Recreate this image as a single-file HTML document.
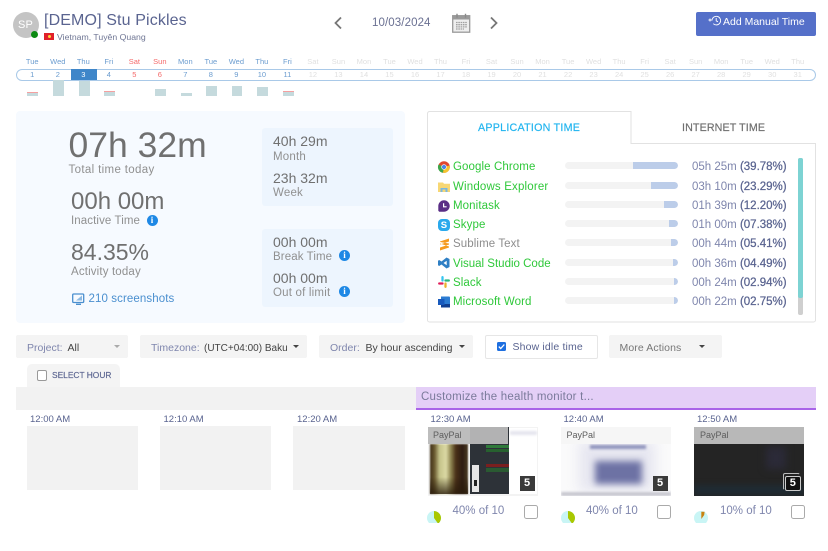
<!DOCTYPE html>
<html><head><meta charset="utf-8">
<style>
html{background:#fff}
html,body{margin:0;padding:0;width:828px;height:551px;overflow:hidden}
body{position:relative;font-family:"Liberation Sans",sans-serif;background:#fff;filter:blur(.35px)}
.t{position:absolute;white-space:nowrap;line-height:1}
.b{position:absolute}
.cal{position:absolute;left:19.5px;width:791.43px;display:grid;grid-template-columns:repeat(31,25.53px);text-align:center;font-size:7.5px;line-height:1}
.d{color:#6b9ccf}.w{color:#f46a6a}.o{color:#e0e0e0}
.s{color:#fff}
.bar{position:absolute;background:#c5dadd;width:10.5px;bottom:455px}
.red{border-top:1.5px solid #f5a0a0;box-sizing:border-box}
.g{color:#2fc83a;font-size:11.5px;letter-spacing:.1px}
.tr{position:absolute;left:565px;width:112.5px;height:7px;background:#f3f3f3;border-radius:3.5px;overflow:hidden}
.tr i{position:absolute;right:0;top:0;bottom:0;background:#bccde9;border-radius:0 3.5px 3.5px 0}
.tm{position:absolute;left:692px;font-size:11.5px;line-height:1;color:#7f86ad;white-space:nowrap}
.tm b{font-weight:normal;color:#5a6490;-webkit-text-stroke:.25px #5a6490}
.f{position:absolute;top:335px;height:23px;background:#f4f4f4;border-radius:2px}
.lab{color:#7f86ad;font-size:10.5px}
.val{color:#444;font-size:10.5px}
.car{position:absolute;width:0;height:0;border-left:3.5px solid transparent;border-right:3.5px solid transparent;border-top:3.5px solid #444}
.time{color:#5a6490;font-size:9.5px}
.gr{position:absolute;top:426px;height:64px;background:#f2f2f2}
.info{position:absolute;width:11px;height:11px;border-radius:50%;background:#1e88e5;color:#fff;font:bold 9px/11px "Liberation Serif",serif;text-align:center}
.num{position:absolute;width:15px;height:15px;background:#3a3a3a;color:#fff;font-size:11px;font-weight:bold;line-height:15px;text-align:center}
.chk{position:absolute;width:12px;height:12px;border:1.3px solid #aaa;border-radius:2.5px;background:#fff}
.pct{position:absolute;color:#7f86ad;font-size:11.5px;line-height:1;white-space:nowrap}
.pp{position:absolute;color:#5d5d5d;font-size:9px;line-height:1}
.sm{font-size:11.5px;color:#909090;letter-spacing:.2px}
</style></head><body>

<!-- header -->
<div class="b" style="left:13px;top:12px;width:26px;height:26px;border-radius:50%;background:#c4c4c4"></div>
<div class="t" style="left:18px;top:19.5px;font-size:11px;color:#fff;letter-spacing:.2px">SP</div>
<div class="b" style="left:31px;top:31px;width:7px;height:7px;border-radius:50%;background:#0c8a12"></div>
<div class="t" style="left:44px;top:12.5px;font-size:16px;color:#5a6490;letter-spacing:.13px">[DEMO] Stu Pickles</div>
<div class="b" style="left:44px;top:32.5px;width:10px;height:7px;background:#e0202a"></div>
<div class="b" style="left:47.5px;top:34.5px;width:3px;height:3px;background:#ffd83a;border-radius:50%"></div>
<div class="t" style="left:57px;top:33px;font-size:8.7px;color:#6f7694">Vietnam, Tuyên Quang</div>

<svg class="b" style="left:332px;top:16px" width="12" height="14" viewBox="0 0 12 14"><path d="M9 1.5 L3.5 7 L9 12.5" fill="none" stroke="#777" stroke-width="1.8"/></svg>
<div class="t" style="left:372px;top:18px;font-size:11.5px;color:#6a7092;letter-spacing:.1px">10/03/2024</div>
<svg class="b" style="left:452px;top:13px" width="19" height="20" viewBox="0 0 19 20">
<rect x=".7" y="2.7" width="17" height="16.5" fill="#eee" stroke="#9a9a9a" stroke-width="1.3"/>
<rect x="1" y="3" width="16.5" height="3.5" fill="#9a9a9a"/>
<path d="M5 .7v4M13.5 .7v4" stroke="#8a8a8a" stroke-width="1.4"/>
<path d="M4 9.5h11M4 11.7h11M4 13.9h11M4 16h8" stroke="#a0a0a0" stroke-width="1.3" stroke-dasharray="1.6 .7"/></svg>
<svg class="b" style="left:488px;top:16px" width="12" height="14" viewBox="0 0 12 14"><path d="M3 1.5 L8.5 7 L3 12.5" fill="none" stroke="#777" stroke-width="1.8"/></svg>

<div class="b" style="left:696px;top:11.5px;width:120px;height:24.5px;background:#5570c9;border-radius:2px"></div>
<svg class="b" style="left:708px;top:15px" width="13" height="11" viewBox="0 0 13 11"><path d="M4 5.5a4.3 4.3 0 1 1 1.3 3.2" fill="none" stroke="#fff" stroke-width=".9"/><path d="M8.2 3v2.8l1.8 1" fill="none" stroke="#fff" stroke-width=".9"/><path d="M.5 5h3M2 3.5v3" stroke="#fff" stroke-width=".9"/></svg>
<div class="t" style="left:723px;top:17px;font-size:10.5px;color:#fff">Add Manual Time</div>

<!-- calendar -->
<div class="cal" style="top:58px">
<span class="d">Tue</span><span class="d">Wed</span><span class="d">Thu</span><span class="d">Fri</span><span class="w">Sat</span><span class="w">Sun</span><span class="d">Mon</span><span class="d">Tue</span><span class="d">Wed</span><span class="d">Thu</span><span class="d">Fri</span><span class="o">Sat</span><span class="o">Sun</span><span class="o">Mon</span><span class="o">Tue</span><span class="o">Wed</span><span class="o">Thu</span><span class="o">Fri</span><span class="o">Sat</span><span class="o">Sun</span><span class="o">Mon</span><span class="o">Tue</span><span class="o">Wed</span><span class="o">Thu</span><span class="o">Fri</span><span class="o">Sat</span><span class="o">Sun</span><span class="o">Mon</span><span class="o">Tue</span><span class="o">Wed</span><span class="o">Thu</span>
</div>
<div class="b" style="left:15.5px;top:68.5px;width:798.5px;height:10.5px;border:1px solid #a9c9e8;border-radius:6px"></div>
<div class="b" style="left:71px;top:69px;width:25.5px;height:11px;background:#3f86c9"></div>
<div class="cal" style="top:70.5px">
<span class="d">1</span><span class="d">2</span><span class="s">3</span><span class="d">4</span><span class="w">5</span><span class="w">6</span><span class="d">7</span><span class="d">8</span><span class="d">9</span><span class="d">10</span><span class="d">11</span><span class="o">12</span><span class="o">13</span><span class="o">14</span><span class="o">15</span><span class="o">16</span><span class="o">17</span><span class="o">18</span><span class="o">19</span><span class="o">20</span><span class="o">21</span><span class="o">22</span><span class="o">23</span><span class="o">24</span><span class="o">25</span><span class="o">26</span><span class="o">27</span><span class="o">28</span><span class="o">29</span><span class="o">30</span><span class="o">31</span>
</div>
<div class="bar red" style="left:27.3px;height:4px"></div>
<div class="bar" style="left:53px;height:16px"></div>
<div class="bar" style="left:79px;height:15px"></div>
<div class="bar red" style="left:104px;height:5px"></div>
<div class="bar" style="left:155px;height:7px"></div>
<div class="bar" style="left:181px;height:3px"></div>
<div class="bar" style="left:206px;height:10px"></div>
<div class="bar" style="left:231.5px;height:10px"></div>
<div class="bar" style="left:257px;height:9px"></div>
<div class="bar red" style="left:283px;height:5px"></div>

<!-- left panel -->
<div class="b" style="left:15.5px;top:110.5px;width:389px;height:212.5px;background:#f6faff;border-radius:4px"></div>
<div class="b" style="left:262px;top:128px;width:131px;height:77.5px;background:#edf5fe;border-radius:3px"></div>
<div class="b" style="left:262px;top:229px;width:131px;height:77.5px;background:#edf5fe;border-radius:3px"></div>

<div class="t" style="left:68.5px;top:127.5px;font-size:35.5px;color:#707070">07h 32m</div>
<div class="t sm" style="left:68.5px;top:165px;letter-spacing:.35px">Total time today</div>
<div class="t" style="left:71px;top:189.5px;font-size:24px;color:#707070">00h 00m</div>
<div class="t sm" style="left:71px;top:215.5px;letter-spacing:.1px">Inactive Time</div>
<div class="info" style="left:146.5px;top:214.5px">i</div>
<div class="t" style="left:71px;top:241px;font-size:23px;color:#707070">84.35%</div>
<div class="t sm" style="left:71px;top:267px;letter-spacing:.15px">Activity today</div>
<svg class="b" style="left:71.5px;top:293px" width="13" height="13" viewBox="0 0 13 13"><rect x=".7" y="1" width="11" height="8.5" rx="1" fill="none" stroke="#4a8fcf" stroke-width="1.3"/><path d="M4 11.3h5" stroke="#4a8fcf" stroke-width="1.4"/><path d="M10 2.5v5H4z" fill="#4a8fcf" opacity=".6"/></svg>
<div class="t" style="left:88.5px;top:294px;font-size:11.5px;color:#4a8fcf;letter-spacing:.1px">210 screenshots</div>

<div class="t" style="left:273px;top:134px;font-size:14px;color:#707070">40h 29m</div>
<div class="t sm" style="left:273px;top:151.5px">Month</div>
<div class="t" style="left:273px;top:170.5px;font-size:14px;color:#707070">23h 32m</div>
<div class="t sm" style="left:273px;top:187.5px">Week</div>
<div class="t" style="left:273px;top:235px;font-size:14px;color:#707070">00h 00m</div>
<div class="t sm" style="left:273px;top:252px;letter-spacing:.1px">Break Time</div>
<div class="info" style="left:339px;top:250px">i</div>
<div class="t" style="left:273px;top:270.5px;font-size:14px;color:#707070">00h 00m</div>
<div class="t sm" style="left:273px;top:287.5px">Out of limit</div>
<div class="info" style="left:339px;top:285.5px">i</div>

<!-- tabs panel -->
<svg class="b" style="left:426px;top:110px" width="392" height="214"><path d="M1.5 3.5a2 2 0 0 1 2-2H205V33.5H389.5V210a2 2 0 0 1-2 2H3.5a2 2 0 0 1-2-2Z" fill="#fff" stroke="#e2e2e2" stroke-width="1"/></svg>
<div class="t" style="left:478px;top:123px;font-size:10.7px;color:#22b5ef;letter-spacing:.25px;-webkit-text-stroke:.2px #22b5ef">APPLICATION TIME</div>
<div class="t" style="left:682px;top:123px;font-size:10.7px;color:#707070;letter-spacing:.12px;-webkit-text-stroke:.2px #707070">INTERNET TIME</div>

<!-- app icons -->
<svg class="b" style="left:437px;top:160px" width="14" height="14" viewBox="0 0 14 14"><circle cx="7" cy="7" r="5.8" fill="#e0472f"/><path d="M7 7 L1.5 4.5A5.8 5.8 0 0 0 6 12.8Z" fill="#3da64a"/><path d="M7 7 L6 12.8A5.8 5.8 0 0 0 12.6 5.5Z" fill="#f4c430"/><circle cx="7" cy="7" r="2.7" fill="#fff"/><circle cx="7" cy="7" r="2.1" fill="#4a85e8"/></svg>
<svg class="b" style="left:438px;top:181px" width="12" height="12" viewBox="0 0 12 12"><path d="M0 1.5h5l1 1.3h6V11H0Z" fill="#f7d774"/><rect x="2.5" y="7" width="7" height="4" fill="#7ab7e0"/><rect x="4.5" y="8.5" width="3" height="2.5" fill="#f7d774"/></svg>
<svg class="b" style="left:438px;top:199.5px" width="12" height="12" viewBox="0 0 12 12"><path d="M6 .3a5.7 5.7 0 0 1 0 11.4H1.2L.3 10.800V6A5.7 5.7 0 0 1 6 .3Z" fill="#5a2e86"/><path d="M5.600 3.200v3.600H8.600" fill="none" stroke="#fff" stroke-width="1.200"/></svg>
<div class="b" style="left:438px;top:219px;width:12px;height:12px;border-radius:4px;background:#2aa9ec"></div>
<div class="t" style="left:440.8px;top:220.5px;font-size:9.5px;font-weight:bold;color:#fff">S</div>
<svg class="b" style="left:438.5px;top:238px" width="11" height="13" viewBox="0 0 11 13"><path d="M10 .5v3L1 6.500v-3ZM1 5.500l9 3v-3L1 4ZM10 6.500v3L1 12.500v-3Z" fill="#f59a1f"/></svg>
<svg class="b" style="left:438px;top:257px" width="12" height="12" viewBox="0 0 12 12"><path fill-rule="evenodd" d="M8.500 .5 11.500 2V10L8.500 11.500 3.500 7.500 1.200 9 0 8.200V3.800L1.200 3 3.500 4.500ZM8.700 3.700 5.500 6 8.700 8.300Z" fill="#2f7fc4"/></svg>
<svg class="b" style="left:438px;top:276px" width="12" height="12" viewBox="0 0 12 12"><path d="M4.500 1.200v3.300" stroke="#36c5f0" stroke-width="2.300" stroke-linecap="round"/><path d="M1.200 7.500h3.300" stroke="#e01e5a" stroke-width="2.300" stroke-linecap="round"/><path d="M7.500 7.500v3.300" stroke="#ecb22e" stroke-width="2.300" stroke-linecap="round"/><path d="M7.500 4.500h3.300" stroke="#2eb67d" stroke-width="2.300" stroke-linecap="round"/></svg>
<svg class="b" style="left:438px;top:296px" width="12" height="12" viewBox="0 0 12 12"><path d="M3 .5h8a1 1 0 0 1 1 1v9a1 1 0 0 1-1 1H3Z" fill="#2b7cd3"/><path d="M3 8h9v3.500H3Z" fill="#103f91"/><rect x="0" y="3" width="6.500" height="6" fill="#185abd"/></svg>

<div class="t g" style="left:453px;top:162px">Google Chrome</div>
<div class="t g" style="left:453px;top:181.500px;letter-spacing:.17px">Windows Explorer</div>
<div class="t g" style="left:453px;top:200.500px">Monitask</div>
<div class="t g" style="left:453px;top:220px">Skype</div>
<div class="t g" style="left:453px;top:239px;color:#8d8d8d">Sublime Text</div>
<div class="t g" style="left:453px;top:258.500px;letter-spacing:0">Visual Studio Code</div>
<div class="t g" style="left:453px;top:277.500px">Slack</div>
<div class="t g" style="left:453px;top:297px">Microsoft Word</div>

<div class="tr" style="top:162px"><i style="width:44.500px"></i></div>
<div class="tr" style="top:181.500px"><i style="width:26.500px"></i></div>
<div class="tr" style="top:200.500px"><i style="width:13.500px"></i></div>
<div class="tr" style="top:220px"><i style="width:8.500px"></i></div>
<div class="tr" style="top:239px"><i style="width:6.500px"></i></div>
<div class="tr" style="top:258.500px"><i style="width:5px"></i></div>
<div class="tr" style="top:277.500px"><i style="width:3.500px"></i></div>
<div class="tr" style="top:297px"><i style="width:3.500px"></i></div>

<div class="tm" style="top:162px">05h 25m <b>(39.78%)</b></div>
<div class="tm" style="top:181.500px">03h 10m <b>(23.29%)</b></div>
<div class="tm" style="top:200.500px">01h 39m <b>(12.20%)</b></div>
<div class="tm" style="top:220px">01h 00m <b>(07.38%)</b></div>
<div class="tm" style="top:239px">00h 44m <b>(05.41%)</b></div>
<div class="tm" style="top:258.500px">00h 36m <b>(04.49%)</b></div>
<div class="tm" style="top:277.500px">00h 24m <b>(02.94%)</b></div>
<div class="tm" style="top:297px">00h 22m <b>(02.75%)</b></div>

<div class="b" style="left:798px;top:158px;width:4.500px;height:157px;background:#cfcfcf;border-radius:2px"></div>
<div class="b" style="left:798px;top:158px;width:4.500px;height:140px;background:#7dd3d3;border-radius:2px"></div>

<!-- filters -->
<div class="f" style="left:15.500px;width:112.500px"></div>
<div class="t lab" style="left:27px;top:343px">Project:</div>
<div class="t val" style="left:67.500px;top:343px">All</div>
<div class="car" style="left:113.500px;top:345px;border-top-color:#aaa"></div>
<div class="f" style="left:140px;width:167px"></div>
<div class="t lab" style="left:151px;top:343px">Timezone:</div>
<div class="t val" style="left:204px;top:343.500px;font-size:10px">(UTC+04:00) Baku</div>
<div class="car" style="left:292.500px;top:345px"></div>
<div class="f" style="left:318.500px;width:154.500px"></div>
<div class="t lab" style="left:330px;top:343px">Order:</div>
<div class="t val" style="left:365.500px;top:343px">By hour ascending</div>
<div class="car" style="left:458.500px;top:345px"></div>
<div class="b" style="left:485px;top:335px;width:111px;height:22px;background:#fff;border:1px solid #e6e6e6;border-radius:2px"></div>
<div class="b" style="left:497px;top:342px;width:9px;height:9px;background:#1e6fe0;border-radius:1.500px"></div>
<svg class="b" style="left:497px;top:342px" width="9" height="9" viewBox="0 0 9 9"><path d="M1.800 4.600 3.700 6.500 7.300 2.500" fill="none" stroke="#fff" stroke-width="1.300"/></svg>
<div class="t" style="left:512.500px;top:342px;font-size:10.500px;color:#5a6490;letter-spacing:.15px">Show idle time</div>
<div class="f" style="left:609px;width:112.500px"></div>
<div class="t" style="left:619.500px;top:343px;font-size:10.500px;color:#777;letter-spacing:.1px">More Actions</div>
<div class="car" style="left:699px;top:345px"></div>

<!-- select hour -->
<div class="b" style="left:27px;top:364px;width:93px;height:23px;background:#f4f4f4;border-radius:5px 5px 0 0"></div>
<div class="b" style="left:36.500px;top:370px;width:8.500px;height:8.500px;border:1px solid #999;border-radius:2px;background:#fff"></div>
<div class="t" style="left:52px;top:370.500px;font-size:8.400px;color:#5a6490;-webkit-text-stroke:.15px #5a6490">SELECT HOUR</div>

<div class="b" style="left:15.500px;top:387px;width:400.500px;height:22.500px;background:#f2f2f2"></div>
<div class="b" style="left:416px;top:387px;width:400px;height:21px;background:#e4cff7;border-bottom:2px solid #a964e8"></div>
<div class="t" style="left:421px;top:392px;font-size:11.500px;color:#7a7a9a;letter-spacing:.22px">Customize the health monitor t...</div>

<!-- times -->
<div class="t time" style="left:30px;top:414.500px">12:00 AM</div>
<div class="t time" style="left:163.500px;top:414.500px">12:10 AM</div>
<div class="t time" style="left:297px;top:414.500px">12:20 AM</div>
<div class="t time" style="left:430.500px;top:414.500px">12:30 AM</div>
<div class="t time" style="left:563.500px;top:414.500px">12:40 AM</div>
<div class="t time" style="left:697px;top:414.500px">12:50 AM</div>
<div class="gr" style="left:27px;width:111px"></div>
<div class="gr" style="left:160px;width:111px"></div>
<div class="gr" style="left:293px;width:112px"></div>

<!-- thumb 1 -->
<div class="b" style="left:427.500px;top:427px;width:110.500px;height:68.500px;background:#f3f3f3;overflow:hidden">
  <div class="b" style="left:80px;top:1px;width:29px;height:66px;background:#fff"></div>
  <div class="b" style="left:82px;top:4px;width:27px;height:4px;background:#e6e6ee;filter:blur(1px)"></div>
  <div class="b" style="left:2px;top:0;width:39px;height:67px;background:#fff"></div>
  <div class="b" style="left:2px;top:17px;width:38px;height:50px;background:linear-gradient(90deg,#3f2f18 0%,#6a5a30 12%,#c5c38a 25%,#dbd9a4 42%,#8e8450 55%,#4a3018 68%,#2e1c12 85%,#4a3a22 100%);filter:blur(.7px)"></div>
  <div class="b" style="left:2px;top:50px;width:38px;height:17px;background:linear-gradient(180deg,rgba(40,26,10,0),rgba(40,26,10,.8))"></div>
  <div class="b" style="left:42px;top:0;width:39px;height:67px;background:#2d3238"></div>
  <div class="b" style="left:58px;top:18px;width:23px;height:3px;background:#2f7a3a"></div>
  <div class="b" style="left:58px;top:22px;width:23px;height:3px;background:#27612f"></div>
  <div class="b" style="left:58px;top:37px;width:23px;height:3px;background:#7a1f1f"></div>
  <div class="b" style="left:58px;top:41px;width:23px;height:4px;background:#2a5a32"></div>
  <div class="b" style="left:44px;top:38px;width:7px;height:27px;background:#e6e6e6"></div>
  <div class="b" style="left:46px;top:53px;width:3px;height:6px;background:#222"></div>
  <div class="b" style="left:0;top:0;width:80.500px;height:17px;background:rgba(185,185,185,.95)"></div>
</div>
<div class="pp" style="left:433px;top:430.500px">PayPal</div>
<div class="num" style="left:519.500px;top:476px">5</div>
<!-- thumb 2 -->
<div class="b" style="left:560.500px;top:427px;width:110.500px;height:68.500px;background:#fafafb;overflow:hidden">
  <div class="b" style="left:18px;top:14px;width:76px;height:50px;background:#e6e6f0;filter:blur(6px)"></div>
  <div class="b" style="left:29px;top:18px;width:56px;height:3.500px;background:#8f93bc;filter:blur(1.200px)"></div>
  <div class="b" style="left:34px;top:34px;width:47px;height:23px;background:#6d72a4;filter:blur(3.500px)"></div>
  <div class="b" style="left:0;top:65px;width:110.500px;height:4px;background:#c8c8d0;filter:blur(1px)"></div>
  <div class="b" style="left:0;top:0;width:110.500px;height:17px;background:#f6f6f6"></div>
</div>
<div class="pp" style="left:566.500px;top:430.500px">PayPal</div>
<div class="num" style="left:652.500px;top:476px">5</div>
<!-- thumb 3 -->
<div class="b" style="left:694px;top:427px;width:110px;height:68.500px;background:#242424;overflow:hidden">
  <div class="b" style="left:72px;top:20px;width:20px;height:22px;background:#2b2a38;filter:blur(4px)"></div>
  <div class="b" style="left:0;top:58px;width:110px;height:10px;background:#1f2b33;filter:blur(3px)"></div>
  <div class="b" style="left:0;top:0;width:110px;height:17px;background:#b8b8b8"></div>
</div>
<div class="pp" style="left:700px;top:430.500px">PayPal</div>
<div class="b" style="left:782.500px;top:473px;width:15px;height:15px;border:1px solid #bbb;border-right-color:transparent;border-bottom-color:transparent;border-radius:2px"></div>
<div class="num" style="left:785px;top:475.500px;width:13.500px;height:13.500px;line-height:13.500px;background:#111;border:1.500px solid #ccc;border-radius:2px">5</div>

<!-- pies -->
<svg class="b" style="left:426px;top:510px" width="16" height="13" viewBox="-8 -8 16 13"><circle r="7" fill="#c9f5f5"/><path d="M0 0V-7A7 7 0 0 1 4.110 5.660Z" fill="#a9c800"/></svg>
<svg class="b" style="left:559.500px;top:510px" width="16" height="13" viewBox="-8 -8 16 13"><circle r="7" fill="#c9f5f5"/><path d="M0 0V-7A7 7 0 0 1 4.110 5.660Z" fill="#a9c800"/></svg>
<svg class="b" style="left:693px;top:510px" width="16" height="13" viewBox="-8 -8 16 13"><circle r="7" fill="#c9f5f5"/><path d="M.3 1V-6.300H3.600L3.200 -3Z" fill="#c9820f"/></svg>

<div class="pct" style="left:452.500px;top:506px">40% of 10</div>
<div class="pct" style="left:586px;top:506px">40% of 10</div>
<div class="pct" style="left:720px;top:506px">10% of 10</div>
<div class="chk" style="left:524px;top:505px"></div>
<div class="chk" style="left:657px;top:505px"></div>
<div class="chk" style="left:790.500px;top:505px"></div>

</body></html>
